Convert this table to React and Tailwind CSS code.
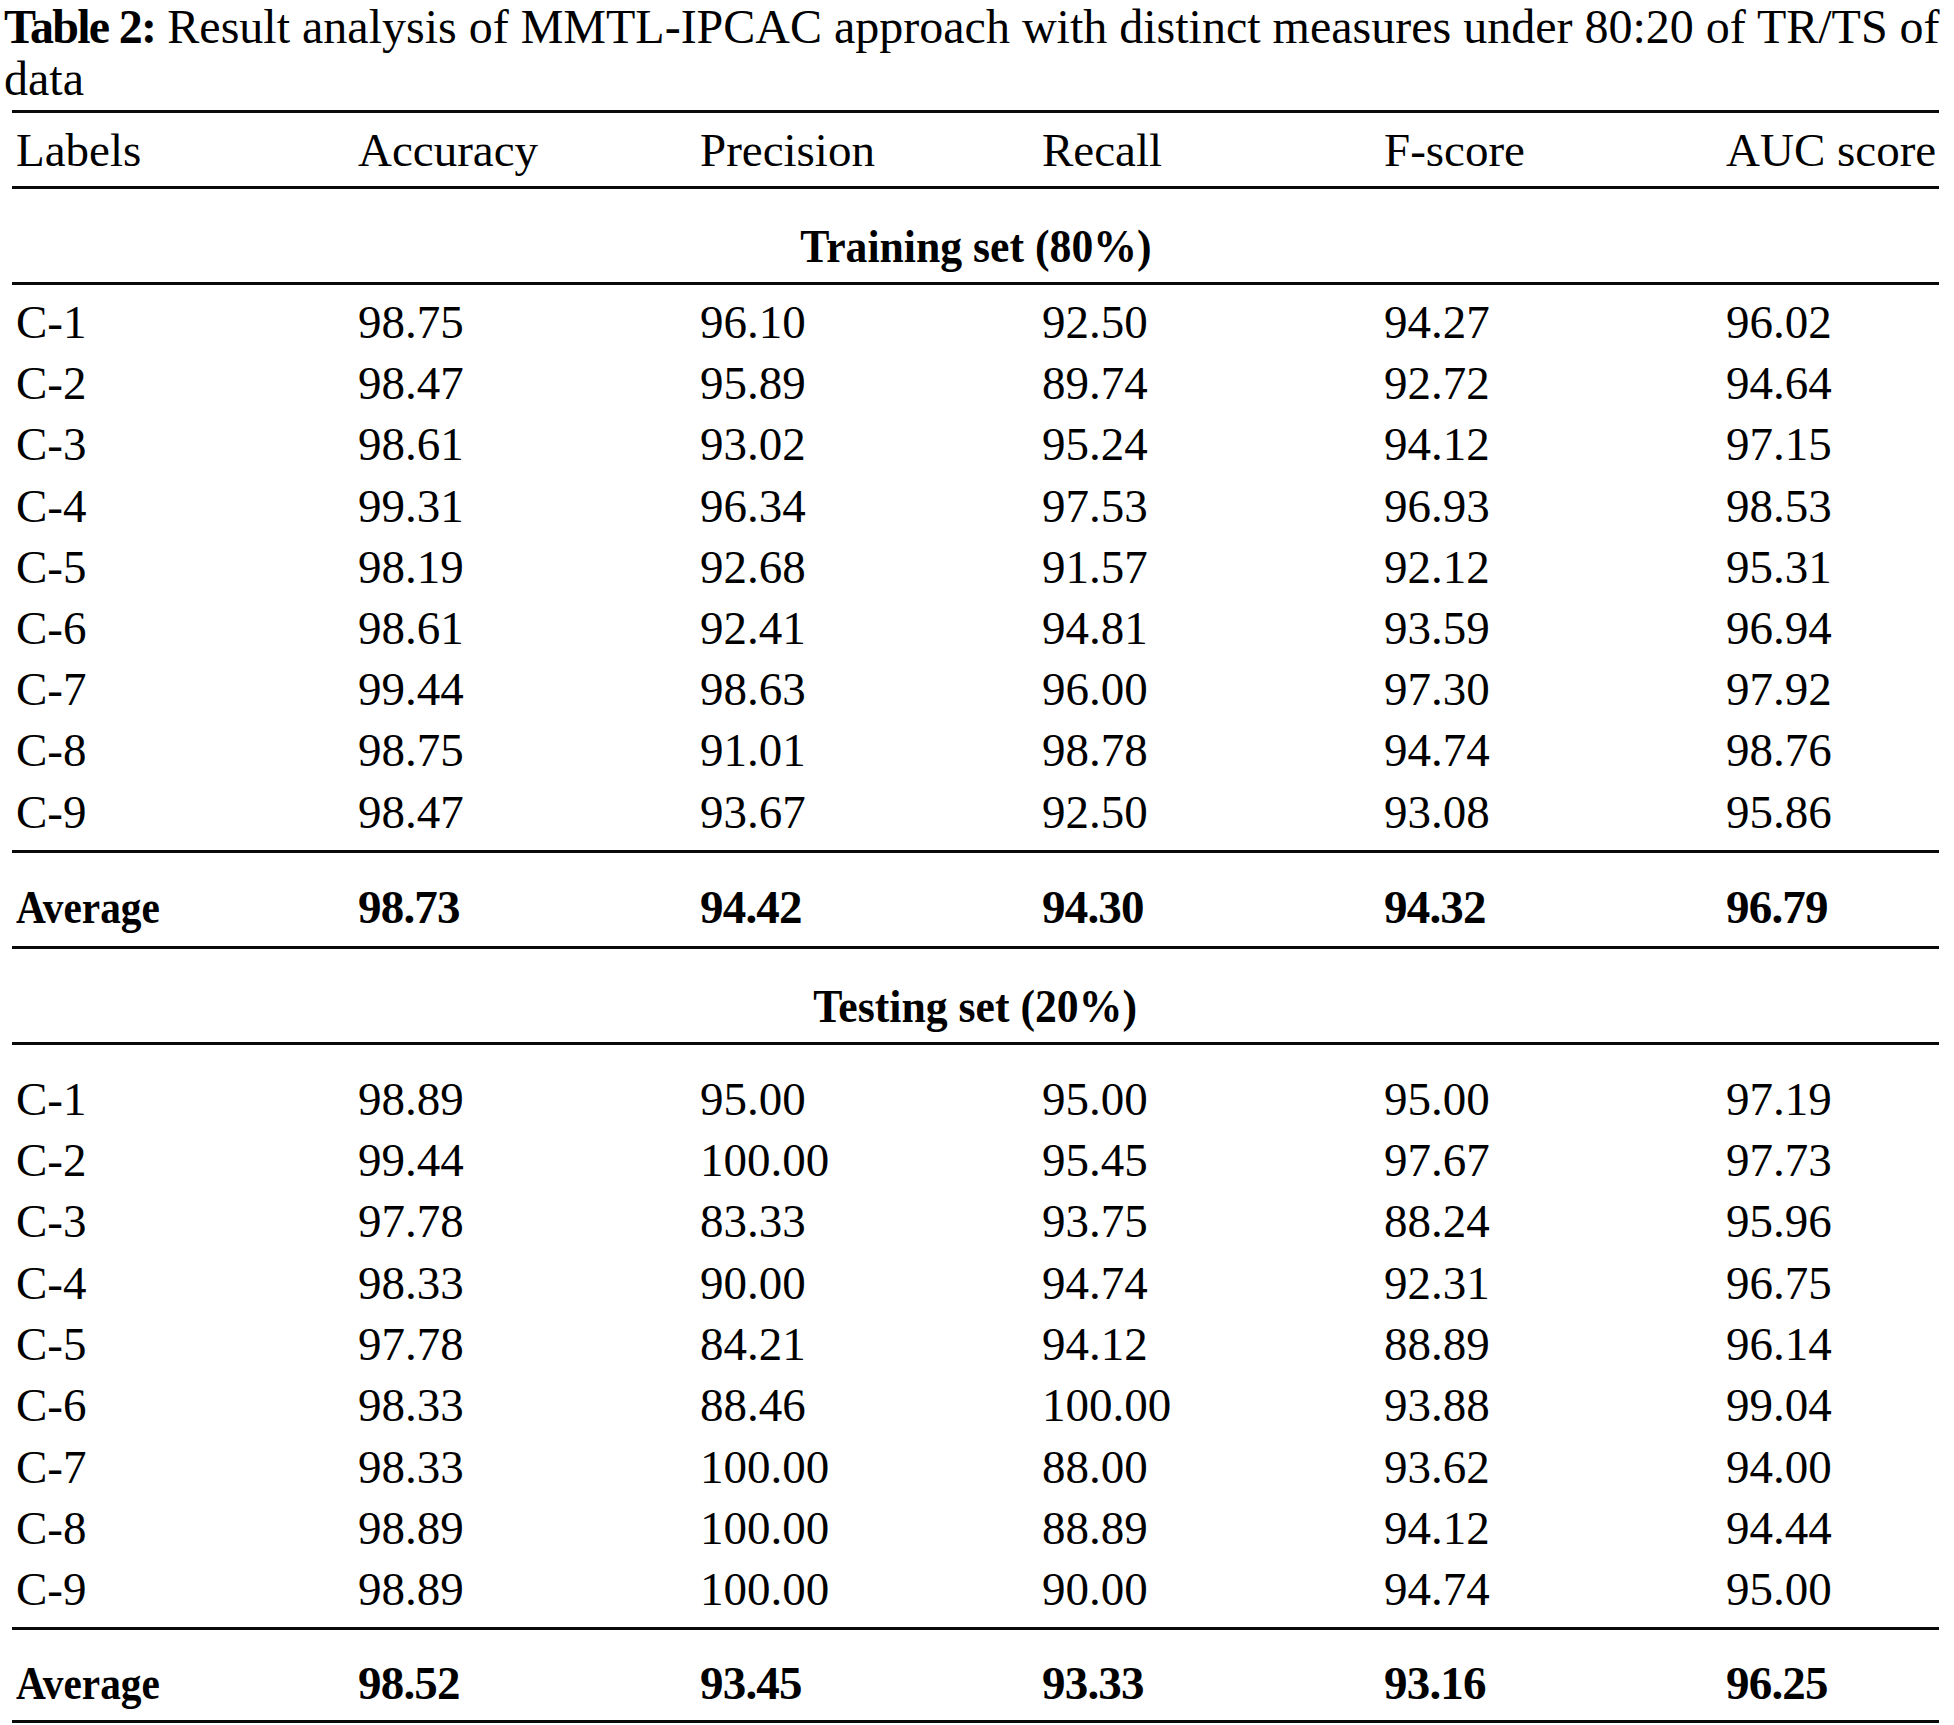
import React from "react";

const training = [
  ["C-1", "98.75", "96.10", "92.50", "94.27", "96.02"],
  ["C-2", "98.47", "95.89", "89.74", "92.72", "94.64"],
  ["C-3", "98.61", "93.02", "95.24", "94.12", "97.15"],
  ["C-4", "99.31", "96.34", "97.53", "96.93", "98.53"],
  ["C-5", "98.19", "92.68", "91.57", "92.12", "95.31"],
  ["C-6", "98.61", "92.41", "94.81", "93.59", "96.94"],
  ["C-7", "99.44", "98.63", "96.00", "97.30", "97.92"],
  ["C-8", "98.75", "91.01", "98.78", "94.74", "98.76"],
  ["C-9", "98.47", "93.67", "92.50", "93.08", "95.86"],
];
const avg1 = ["Average", "98.73", "94.42", "94.30", "94.32", "96.79"];
const testing = [
  ["C-1", "98.89", "95.00", "95.00", "95.00", "97.19"],
  ["C-2", "99.44", "100.00", "95.45", "97.67", "97.73"],
  ["C-3", "97.78", "83.33", "93.75", "88.24", "95.96"],
  ["C-4", "98.33", "90.00", "94.74", "92.31", "96.75"],
  ["C-5", "97.78", "84.21", "94.12", "88.89", "96.14"],
  ["C-6", "98.33", "88.46", "100.00", "93.88", "99.04"],
  ["C-7", "98.33", "100.00", "88.00", "93.62", "94.00"],
  ["C-8", "98.89", "100.00", "88.89", "94.12", "94.44"],
  ["C-9", "98.89", "100.00", "90.00", "94.74", "95.00"],
];
const avg2 = ["Average", "98.52", "93.45", "93.33", "93.16", "96.25"];

const headers = ["Labels", "Accuracy", "Precision", "Recall", "F-score", "AUC score"];

function Rule() {
  return <div className="h-[3px] w-full bg-[#0a0a0a]" />;
}

function Row({ cells, leading }) {
  return (
    <div className={`grid grid-cols-[342px_342px_342px_342px_342px_1fr] pl-[4px] whitespace-nowrap ${leading}`}>
      {cells.map((c, i) => (
        <div key={i}>{c}</div>
      ))}
    </div>
  );
}

function AvgRow({ cells, pad }) {
  return (
    <div className={`grid grid-cols-[342px_342px_342px_342px_342px_1fr] pl-[4px] whitespace-nowrap font-bold leading-[61px] ${pad}`}>
      {cells.map((c, i) =>
        i === 0 ? (
          <div key={i}>
            <span className="inline-block origin-left scale-x-[0.88]">{c}</span>
          </div>
        ) : (
          <div key={i} className="tracking-[-0.8px]">{c}</div>
        )
      )}
    </div>
  );
}

function Section({ label }) {
  return (
    <div className="pt-[27px] pb-[5px] text-center font-bold leading-[61px] whitespace-nowrap">
      <span className="inline-block scale-x-[0.93]">{label}</span>
    </div>
  );
}

export default function App() {
  return (
    <div
      className="w-[1954px] h-[1725px] overflow-hidden bg-white text-black"
      style={{ fontFamily: '"Liberation Serif", "Times New Roman", serif' }}
    >
      <div className="pl-[4px] text-[48px] whitespace-nowrap">
        <div className="leading-[54px]">
          <span className="font-bold tracking-[-1.7px]">Table 2:</span> Result analysis of MMTL-IPCAC approach with distinct measures under 80:20 of TR/TS of
        </div>
        <div className="leading-[50px]">data</div>
      </div>
      <div className="mt-[6px] ml-[12px] w-[1927px] text-[47px]">
        <Rule />
        <div className="pt-[7px] pb-[5px]">
          <Row cells={headers} leading="leading-[61px]" />
        </div>
        <Rule />
        <Section label="Training set (80%)" />
        <Rule />
        <div className="pt-[7px] pb-[7px]">
          {training.map((r, i) => (
            <Row key={i} cells={r} leading="leading-[61.2px]" />
          ))}
        </div>
        <Rule />
        <AvgRow cells={avg1} pad="pt-[24px] pb-[8px]" />
        <Rule />
        <Section label="Testing set (20%)" />
        <Rule />
        <div className="pt-[24px] pb-[6px]">
          {testing.map((r, i) => (
            <Row key={i} cells={r} leading="leading-[61.3px]" />
          ))}
        </div>
        <Rule />
        <AvgRow cells={avg2} pad="pt-[23px] pb-[6px]" />
        <Rule />
      </div>
    </div>
  );
}
